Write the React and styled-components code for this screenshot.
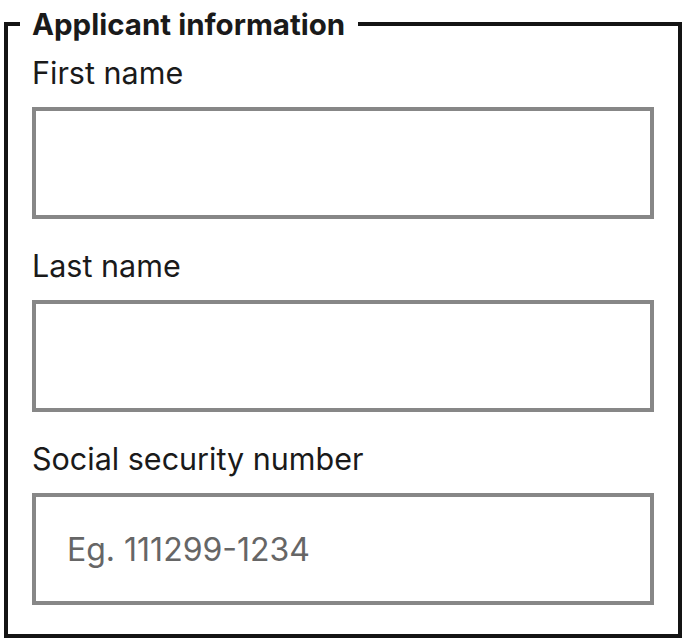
import React from "react";
import styled, { createGlobalStyle } from "styled-components";

const Global = createGlobalStyle`
  html, body { margin: 0; padding: 0; background: #fff; }
  body { font-family: Inter, "Liberation Sans", Arial, sans-serif; color: #1a1a1a; }
  * { box-sizing: border-box; }
`;

const Page = styled.div`
  padding: 6px 4px 0;
`;

const Fieldset = styled.fieldset`
  margin: 0;
  border: 4px solid #141414;
  padding: 13px 24px 29px;
  min-width: 0;
`;

const Legend = styled.legend`
  font-size: 29.5px;
  line-height: 36px;
  font-weight: 700;
  color: #1a1a1a;
  padding: 0 13px 0 12px;
  margin-left: -12px;
`;

const Fields = styled.div`
  display: flex;
  flex-direction: column;
  gap: 29px;
`;

const Field = styled.div`
  display: flex;
  flex-direction: column;
  gap: 16px;
`;

const Label = styled.label`
  font-size: 30.5px;
  line-height: 36px;
  font-weight: 400;
  color: #1a1a1a;
`;

const Input = styled.input`
  display: block;
  width: 100%;
  height: 112px;
  border: 4px solid #878787;
  border-radius: 0;
  padding: 0 31px;
  font-family: Inter, "Liberation Sans", Arial, sans-serif;
  font-size: 32px;
  color: #1a1a1a;
  background: #fff;
  outline: none;
  &::placeholder {
    color: #666666;
    opacity: 1;
  }
`;

const fields = [
  { id: "first", label: "First name" },
  { id: "last", label: "Last name" },
  { id: "ssn", label: "Social security number", placeholder: "Eg. 111299-1234" },
];

export default function App() {
  return (
    <>
      <Global />
      <Page>
        <Fieldset>
          <Legend>Applicant information</Legend>
          <Fields>
            {fields.map((f) => (
              <Field key={f.id}>
                <Label htmlFor={f.id}>{f.label}</Label>
                <Input id={f.id} type="text" placeholder={f.placeholder} />
              </Field>
            ))}
          </Fields>
        </Fieldset>
      </Page>
    </>
  );
}
